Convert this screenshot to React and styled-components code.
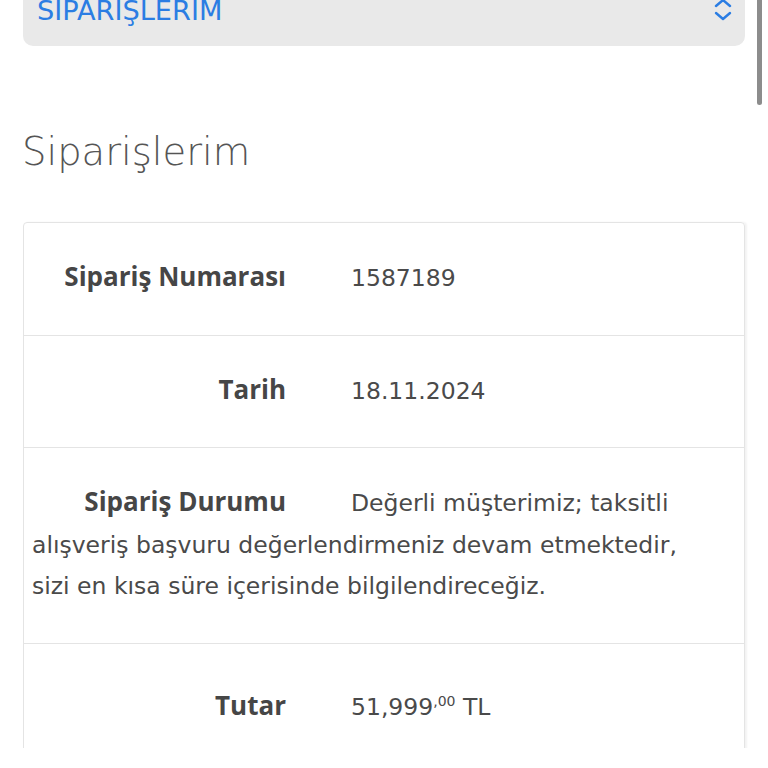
import React from "react";
import styled, { createGlobalStyle } from "styled-components";

const GlobalStyle = createGlobalStyle`
    html, body {
        margin: 0;
        padding: 0;
        background: #fff;
        font-family: "DejaVu Sans", "Open Sans", sans-serif;
        color: #4a4a4a;
        overflow: hidden;
    }
`;

const Page = styled.div`
    padding: 0 23px;
    position: relative;
    height: 768px;
`;

const Select = styled.div`
    margin-top: -20px;
    height: 66px;
    background: #e9e9e9;
    border-radius: 0 0 10px 10px;
    display: flex;
    align-items: center;
    justify-content: space-between;
    padding: 0 12px 0 14px;
    color: #2b7de3;
    font-size: 27.2px;
`;

const SelectText = styled.span`
    margin-top: -6px;
`;

const Heading = styled.h1`
    margin: 78px 0 0 -1px;
    font-size: 38.5px;
    font-weight: 200;
    line-height: 56px;
    color: #555;
`;

const Table = styled.div`
    margin-top: 42px;
    border: 1px solid #e4e4e4;
    border-radius: 4px 4px 0 0;
    box-shadow: 2px 0 2px rgba(0, 0, 0, 0.05);
`;

const Row = styled.div`
    padding: ${({ raised }) => (raised ? "43px" : "35px")} 40px 35px 8px;
    font-size: 23.5px;
    line-height: 41.5px;
    border-top: ${({ first }) => (first ? "none" : "1px solid #e4e4e4")};
`;

const Label = styled.span`
    display: inline-block;
    width: 254px;
    margin-right: 65px;
    text-align: right;
    font-family: "Open Sans", sans-serif;
    font-size: 26px;
    line-height: 1;
    font-weight: 700;
    color: #464646;
`;

const Value = styled.span`
    sup {
        font-size: 14px;
        line-height: 0;
    }
`;

const Scrollbar = styled.div`
    position: absolute;
    top: -4px;
    right: 6px;
    width: 5px;
    height: 129px;
    border-radius: 3px;
    background: #8c8c8c;
`;

const Chevrons = () => (
    <svg width="20" height="24" viewBox="0 0 20 24" fill="none" stroke="#2b7de3" strokeWidth="2.4" strokeLinecap="round" strokeLinejoin="round" style={{ marginTop: "-6px" }}>
        <path d="M3 8 L10 2 L17 8" />
        <path d="M3 15 L10 21 L17 15" />
    </svg>
);

const rows = [
    { label: "Sipariş Numarası", value: "1587189" },
    { label: "Tarih", value: "18.11.2024" },
    {
        label: "Sipariş Durumu",
        value: "Değerli müşterimiz; taksitli alışveriş başvuru değerlendirmeniz devam etmektedir, sizi en kısa süre içerisinde bilgilendireceğiz.",
    },
];

export default function App() {
    return (
        <>
            <GlobalStyle />
            <Page>
                <Select>
                    <SelectText>SIPARIŞLERIM</SelectText>
                    <Chevrons />
                </Select>
                <Heading>Siparişlerim</Heading>
                <Table>
                    {rows.map((r, i) => (
                        <Row key={r.label} first={i === 0}>
                            <Label>{r.label}</Label>
                            <Value>{r.value}</Value>
                        </Row>
                    ))}
                    <Row raised>
                        <Label>Tutar</Label>
                        <Value>
                            51,999<sup>,00</sup> TL
                        </Value>
                    </Row>
                    <Row />
                </Table>
                <Scrollbar />
            </Page>
        </>
    );
}
